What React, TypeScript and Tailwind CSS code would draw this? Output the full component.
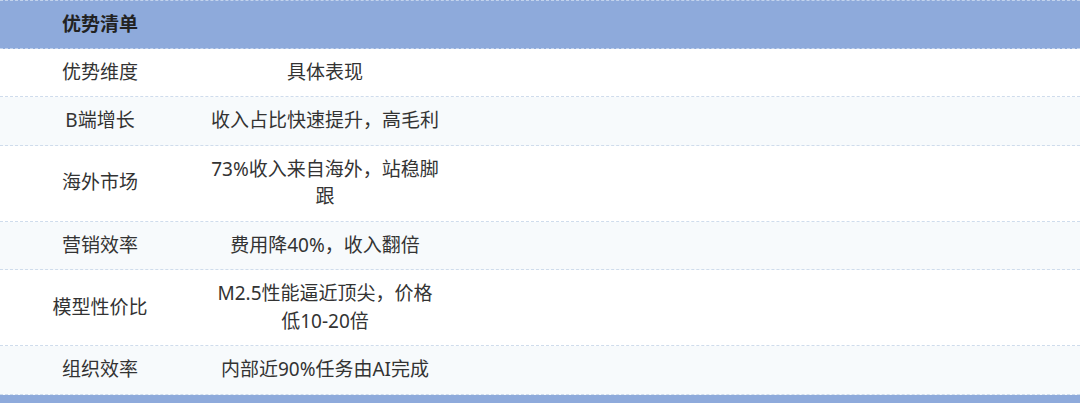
// 优势清单 — two-column comparison table
const rows: { dim: string; desc: string }[] = [
  { dim: "B端增长", desc: "收入占比快速提升，高毛利" },
  { dim: "海外市场", desc: "73%收入来自海外，站稳脚跟" },
  { dim: "营销效率", desc: "费用降40%，收入翻倍" },
  { dim: "模型性价比", desc: "M2.5性能逼近顶尖，价格低10-20倍" },
  { dim: "组织效率", desc: "内部近90%任务由AI完成" },
];

const font = { fontFamily: '"Noto Sans", "Noto Sans CJK SC", sans-serif' };

export default function App() {
  return (
    <div className="w-[1080px] h-[403px] overflow-hidden bg-white text-[19px] leading-[27.5px] text-[#333333]" style={font}>
      {/* Header */}
      <div className="flex bg-[#8eaadb] border-t border-b border-dashed border-[#c3d3ec]">
        <div className="w-[200px] py-[9.5px] text-center font-bold text-[#222222]">优势清单</div>
        <div className="flex-1" />
      </div>

      {/* Column titles */}
      <div className="flex bg-white border-b border-dashed border-[#cfdcec]">
        <div className="w-[200px] py-[10px] text-center">优势维度</div>
        <div className="w-[250px] px-[10px] py-[10px] text-center">具体表现</div>
        <div className="flex-1" />
      </div>

      {rows.map((r, i) => (
        <div
          key={i}
          className={`flex items-center border-b border-dashed border-[#cfdcec] ${i % 2 === 0 ? "bg-[#f7fafc]" : "bg-white"}`}
        >
          <div className="w-[200px] py-[10px] text-center">{r.dim}</div>
          <div className="w-[250px] px-[10px] py-[10px] text-center">{r.desc}</div>
          <div className="flex-1" />
        </div>
      ))}

      {/* Next section bar */}
      <div className="h-[30px] bg-[#8eaadb]" />
    </div>
  );
}
